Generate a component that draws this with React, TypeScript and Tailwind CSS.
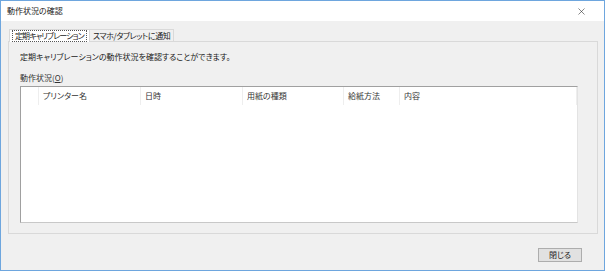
import { X } from "lucide-react";

const columns = [
  { label: "", width: "w-[18px]" },
  { label: "プリンター名", width: "w-[102px]" },
  { label: "日時", width: "w-[102px]" },
  { label: "用紙の種類", width: "w-[101px]" },
  { label: "給紙方法", width: "w-[56px]" },
  { label: "内容", width: "flex-1" },
];

export default function App() {
  return (
    <div className="w-[605px] h-[271px] flex flex-col bg-[#f0f0f0] border border-[#6ea6de] font-['Noto_Sans_CJK_JP',sans-serif] text-[8px] leading-none text-[#1a1a1a] [font-feature-settings:'palt'] overflow-hidden">
      {/* Title bar */}
      <div className="h-[20px] shrink-0 bg-white flex items-center justify-between pl-[6px] pr-[17px]">
        <span>動作状況の確認</span>
        <X size={11} strokeWidth={1.2} className="text-[#222]" />
      </div>

      {/* Body */}
      <div className="flex-1 flex flex-col px-[7px] pt-[7px]">
        {/* Tabs */}
        <div className="flex items-end h-[13px] pl-[1px]">
          <div className="h-[13px] px-[2px] flex items-center bg-white border border-b-0 border-[#d9d9d9] relative z-10 -mb-px">
            <span className="border border-dotted border-[#555] px-[2px] py-[1px] tracking-[-0.9px]">定期キャリブレーション</span>
          </div>
          <div className="h-[12px] px-[3px] flex items-center border border-l-0 border-b-0 border-[#d9d9d9] bg-[#f0f0f0] tracking-[-0.4px]">
            スマホ/タブレットに通知
          </div>
        </div>

        {/* Panel */}
        <div className="w-[590px] h-[193px] border border-[#d9d9d9] flex flex-col pl-[11px] pt-[11px]">
          <p>定期キャリブレーションの動作状況を確認することができます。</p>
          <p className="mt-[13px] text-[#333]">
            動作状況(<span className="underline">O</span>)
          </p>

          {/* List view */}
          <div className="mt-[4px] w-[558px] h-[137px] bg-white border border-[#a0a0a0] border-r-[#e3e3e3] border-b-[#c8c8c8] flex flex-col">
            <div className="flex h-[18px]">
              {columns.map((c, i) => (
                <div
                  key={i}
                  className={`${c.width} flex items-center pl-[4px] border-r border-[#eeeeee] text-[#333]`}
                >
                  {c.label}
                </div>
              ))}
            </div>
          </div>
        </div>

        {/* Footer */}
        <div className="flex justify-end pr-[15px] pt-[14px]">
          <button className="w-[44px] h-[14px] bg-[#e1e1e1] border border-[#adadad] flex items-center justify-center text-[#222]">
            閉じる
          </button>
        </div>
      </div>
    </div>
  );
}
